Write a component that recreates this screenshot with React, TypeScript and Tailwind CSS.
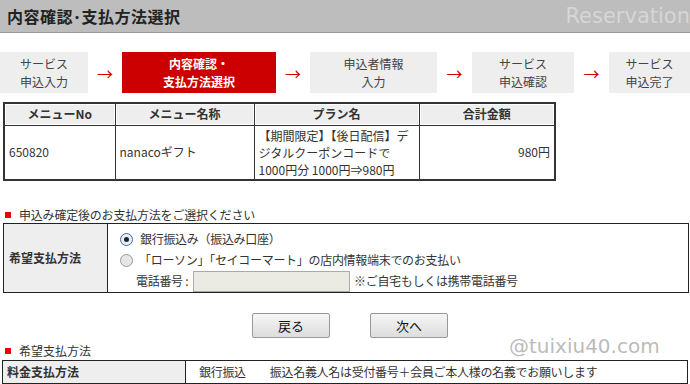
import React from "react";

const jp = { fontFamily: '"Noto Sans CJK JP", "Noto Sans", sans-serif' };

function Arrow({ w }: { w: string }) {
  return (
    <div className={`${w} flex items-center justify-center text-[#cc0000] text-[16px] leading-none`}>
      →
    </div>
  );
}

function Step({ w, lines, active }: { w: string; lines: string[]; active?: boolean }) {
  return (
    <div
      className={`${w} h-full flex flex-col items-center justify-center text-[12px] leading-[18px] ${
        active ? "bg-[#cc0000] text-white font-bold" : "bg-[#eeeeee] text-[#444]"
      }`}
    >
      {lines.map((l) => (
        <div key={l}>{l}</div>
      ))}
    </div>
  );
}

function Radio({ checked }: { checked?: boolean }) {
  return (
    <span
      className={`inline-flex shrink-0 w-[13px] h-[13px] rounded-full items-center justify-center border ${
        checked ? "border-[#3a6fb0] bg-[#e8eef7]" : "border-[#9a9a9a] bg-[#e6e6e6]"
      }`}
    >
      {checked && <span className="w-[5px] h-[5px] rounded-full bg-[#222]" />}
    </span>
  );
}

export default function App() {
  return (
    <div className="w-[690px] h-[384px] bg-white relative overflow-hidden text-[#333]" style={jp}>
      {/* Header */}
      <div className="h-[33px] bg-[#bdbdbd] border-b border-[#9a9a9a] flex items-center justify-between pl-[7px]">
        <div className="text-[16px] font-bold text-[#222] tracking-[0.5px]">内容確認･支払方法選択</div>
        <div
          className="text-[21px] text-[#d6d6d6] leading-none"
          style={{ fontFamily: '"DejaVu Sans", Arial, sans-serif' }}
        >
          Reservation
        </div>
      </div>

      {/* Steps */}
      <div className="mt-[19px] h-[41px] flex">
        <Step w="w-[88px]" lines={["サービス", "申込入力"]} />
        <Arrow w="w-[34px]" />
        <Step w="w-[154px]" lines={["内容確認・", "支払方法選択"]} active />
        <Arrow w="w-[34px]" />
        <Step w="w-[127px]" lines={["申込者情報", "入力"]} />
        <Arrow w="w-[35px]" />
        <Step w="w-[102px]" lines={["サービス", "申込確認"]} />
        <Arrow w="w-[35px]" />
        <Step w="w-[81px]" lines={["サービス", "申込完了"]} />
      </div>

      {/* Table 1 */}
      <div className="mt-[9px] ml-[3px] w-[553px]">
        <table className="w-full border-collapse border-2 border-[#333] text-[12px] text-[#333]">
          <thead>
            <tr className="h-[22px]">
              <th className="w-[111px] border border-[#333] bg-[#eeeeee] font-bold shadow-[inset_0_0_0_1px_#fff]">メニューNo</th>
              <th className="w-[139px] border border-[#333] bg-[#eeeeee] font-bold shadow-[inset_0_0_0_1px_#fff]">メニュー名称</th>
              <th className="w-[165px] border border-[#333] bg-[#eeeeee] font-bold shadow-[inset_0_0_0_1px_#fff]">プラン名</th>
              <th className="border border-[#333] bg-[#eeeeee] font-bold shadow-[inset_0_0_0_1px_#fff]">合計金額</th>
            </tr>
          </thead>
          <tbody>
            <tr className="h-[55px]">
              <td className="border border-[#333] px-[4px]">650820</td>
              <td className="border border-[#333] px-[4px]">nanacoギフト</td>
              <td className="border border-[#333] px-[4px] leading-[17px] font-normal">
                【期間限定】【後日配信】デジタルクーポンコードで1000円分 1000円⇒980円
              </td>
              <td className="border border-[#333] px-[4px] text-right">980円</td>
            </tr>
          </tbody>
        </table>
      </div>

      {/* Section 2 heading */}
      <div className="mt-[25px] ml-[5px] h-[17px] flex items-center text-[12px] text-[#333] tracking-[-0.2px]">
        <span className="w-[6px] h-[6px] bg-[#ee0000] mr-[8px]" />
        <span>申込み確定後のお支払方法をご選択ください</span>
      </div>

      {/* Table 2 */}
      <div className="ml-[3px] w-[686px] h-[70px] flex border border-[#222] text-[12px] tracking-[-0.3px]">
        <div className="w-[104px] bg-[#eeeeee] border-r border-[#222] flex items-center pl-[5px] font-bold tracking-normal">
          希望支払方法
        </div>
        <div className="flex-1 flex flex-col pl-[12px] pt-[5px]">
          <div className="h-[21px] flex items-center gap-[7px]">
            <Radio checked />
            <span>銀行振込み（振込み口座）</span>
          </div>
          <div className="h-[21px] flex items-center gap-[6px]">
            <Radio />
            <span className="whitespace-nowrap">「ローソン」「セイコーマート」の店内情報端末でのお支払い</span>
          </div>
          <div className="h-[22px] flex items-center pl-[16px]">
            <span className="w-[57px] shrink-0 whitespace-nowrap">電話番号 :</span>
            <span className="w-[157px] shrink-0 h-[21px] bg-[#ebebe4] border border-[#aaa]" />
            <span className="ml-[4px] whitespace-nowrap">※ご自宅もしくは携帯電話番号</span>
          </div>
        </div>
      </div>

      {/* Buttons */}
      <div className="mt-[20px] flex justify-center gap-[40px] pl-[10px]">
        <button className="w-[78px] h-[25px] border border-[#999] rounded-[2px] bg-gradient-to-b from-[#f6f6f6] to-[#dddddd] text-[13px] text-[#111]">
          戻る
        </button>
        <button className="w-[78px] h-[25px] border border-[#999] rounded-[2px] bg-gradient-to-b from-[#f6f6f6] to-[#dddddd] text-[13px] text-[#111]">
          次へ
        </button>
      </div>

      {/* Section 3 heading */}
      <div className="mt-[5px] ml-[5px] h-[16px] flex items-center text-[12px] text-[#333]">
        <span className="w-[6px] h-[6px] bg-[#ee0000] mr-[8px]" />
        <span>希望支払方法</span>
      </div>

      {/* Table 3 */}
      <div className="mt-[1px] ml-[2px] w-[686px] h-[24px] flex border border-[#222] text-[12px]">
        <div className="w-[183px] bg-[#eeeeee] border-r border-[#222] flex items-center pl-[4px] font-bold">
          料金支払方法
        </div>
        <div className="flex-1 flex items-center pl-[13px] tracking-[-0.3px]">
          <span className="mr-[24px]">銀行振込</span>
          <span>振込名義人名は受付番号＋会員ご本人様の名義でお願いします</span>
        </div>
      </div>

      {/* Watermark */}
      <div
        className="absolute left-[509px] top-[336px] text-[20px] text-[#bbbbbb] leading-none"
        style={{ fontFamily: '"DejaVu Sans", Arial, sans-serif' }}
      >
        @tuixiu40.com
      </div>
    </div>
  );
}
